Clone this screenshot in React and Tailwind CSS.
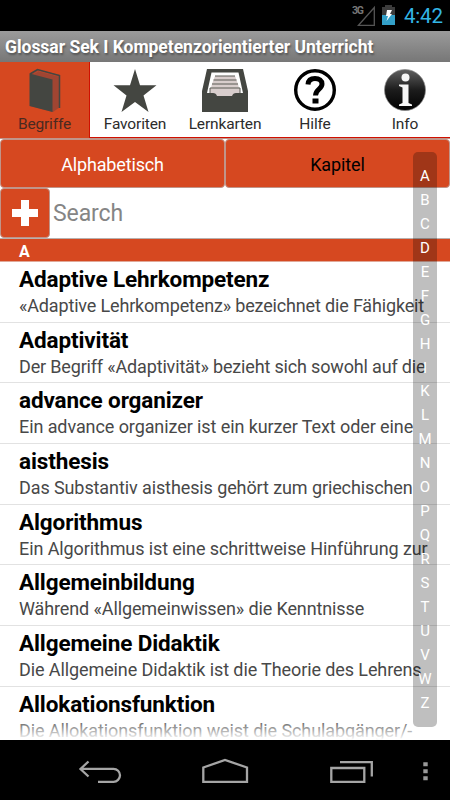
import React from "react";

const entries = [
  { title: "Adaptive Lehrkompetenz", text: "«Adaptive Lehrkompetenz» bezeichnet die Fähigkeit", tracking: "tracking-[-0.165px]" },
  { title: "Adaptivität", text: "Der Begriff «Adaptivität» bezieht sich sowohl auf die", tracking: "tracking-[-0.165px]" },
  { title: "advance organizer", text: "Ein advance organizer ist ein kurzer Text oder eine", tracking: "tracking-[-0.090px]" },
  { title: "aisthesis", text: "Das Substantiv aisthesis gehört zum griechischen", tracking: "tracking-[-0.100px]" },
  { title: "Algorithmus", text: "Ein Algorithmus ist eine schrittweise Hinführung zur", tracking: "tracking-[-0.095px]" },
  { title: "Allgemeinbildung", text: "Während «Allgemeinwissen» die Kenntnisse", tracking: "tracking-[-0.120px]" },
  { title: "Allgemeine Didaktik", text: "Die Allgemeine Didaktik ist die Theorie des Lehrens", tracking: "tracking-[-0.100px]" },
  { title: "Allokationsfunktion", text: "Die Allokationsfunktion weist die Schulabgänger/-", tracking: "tracking-[-0.090px]" },
];

const letters = "ABCDEFGHIKLMNOPQRSTUVWZ".split("");

const BookIcon = () => (
  <svg width="32" height="46" viewBox="0 0 32 46">
    <path d="M1 5.500 8 1.500l23 5.500v32l-7 5L1 38z" fill="#a04532" />
    <path d="M5 5.500 9.500 3 29 8" fill="none" stroke="#c0492c" strokeWidth=".8" />
    <path d="M1 6 8.500 1.500 30.500 7.500V40" fill="none" stroke="#444641" strokeWidth="1.500" />
    <path d="M.5 5.500 23.500 11.500V44L.5 38z" fill="#444641" />
  </svg>
);

const StarIcon = () => (
  <svg width="44" height="46" viewBox="0 0 44 46">
    <path d="M22 1l5 16.300h16.500L30.500 27.500 35.500 44 22 34 8.500 44l5-16.500L.500 17.300H17z" fill="#444641" />
  </svg>
);

const CardsIcon = () => (
  <svg width="48" height="46" viewBox="0 0 48 46">
    <path d="M6 1h36l5 22v21H1V23z" fill="#444641" />
    <path d="M10.500 4.500h27L42 25H6z" fill="#fff" />
    <path d="M14 8h20l1.500 4H12.500zM12.500 12h23l1.500 4H11zM11 16h26l1 4H10zM9 20h30v8H9z" fill="#d8cdcc" />
    <path d="M14 8h20M12.500 12h23M11 16h26M9 20h30M9 20v5M39 20v5" stroke="#5a5a55" strokeWidth="1" />
    <path d="M1 25h11q3 0 4 3l1 2.500h13l1-2.500q1-3 4-3h12v19H1z" fill="#444641" />
  </svg>
);

const HelpIcon = () => (
  <svg width="44" height="46" viewBox="0 0 44 46">
    <circle cx="22" cy="22" r="19.300" fill="#fff" stroke="#000" strokeWidth="3.400" />
    <path d="M15 16.500c.3-4.500 3-6 7-6 4.300 0 7 2 7 5.500 0 5.200-6.500 5-6.500 11.500" fill="none" stroke="#000" strokeWidth="5" />
    <path d="M19.500 30.500h6v5h-6z" />
  </svg>
);

const InfoIcon = () => (
  <svg width="44" height="46" viewBox="0 0 44 46">
    <defs>
      <linearGradient id="ball" x1="0" y1="0" x2="0" y2="1">
        <stop offset="0" stopColor="#606060" />
        <stop offset=".5" stopColor="#1c1c1c" />
        <stop offset="1" stopColor="#000" />
      </linearGradient>
    </defs>
    <circle cx="22" cy="22" r="20.500" fill="url(#ball)" stroke="#888" strokeWidth=".7" />
    <circle cx="22.500" cy="9.500" r="4" fill="#f5f5f5" />
    <path d="M16 16.500h9.500V35l3.500 1.500V38H16v-1.500l3.500-1.500V19.500L16 18z" fill="#f5f5f5" />
  </svg>
);

const tabs = [
  { label: "Begriffe", icon: BookIcon, active: true },
  { label: "Favoriten", icon: StarIcon },
  { label: "Lernkarten", icon: CardsIcon },
  { label: "Hilfe", icon: HelpIcon },
  { label: "Info", icon: InfoIcon },
];

const StatusBar = () => (
  <div className="flex h-[31px] shrink-0 items-center justify-end bg-black pr-[8px]">
    <svg width="45" height="31" viewBox="0 0 45 31">
      <text x="0" y="14" fontSize="10.500" fontWeight="700" fill="#777" textLength="12">3G</text>
      <path d="M6.500 25.300L22.300 7.500v17.800z" fill="none" stroke="#555" strokeWidth="1.300" />
      <path d="M30 7h3V5h7v2h3v8H30z" fill="#3c3c3c" />
      <path d="M30 15h13v10H30z" fill="#33a0c8" />
      <path d="M35 10h5l-2 4h2l-5.500 7 1.500-5h-2z" fill="#fff" />
    </svg>
    <span className="ml-[7px] w-[38px] whitespace-nowrap text-[20.500px] leading-[32px] tracking-[-0.200px] text-[#33b5e5]">4:42</span>
  </div>
);

const TabBar = () => (
  <div className="flex h-[76px] shrink-0">
    {tabs.map(({ label, icon: Icon, active }) => (
      <div
        key={label}
        className={
          active
            ? "flex w-[90px] flex-col items-center border-r border-r-[#d01000] bg-[#d64820] pt-[6px] text-[#4a2a20]"
            : "flex w-[90px] flex-col items-center border-b border-b-[#d01000] bg-white pt-[6px] text-[#2c2c2c]"
        }
      >
        <Icon />
        <span className="text-[15.500px] leading-[20px] tracking-[-0.150px]">{label}</span>
      </div>
    ))}
  </div>
);

const Entry = ({ title, text, tracking }) => (
  <div className="h-[60.700px] shrink-0 border-b border-[#e2e2e2] pl-[19px] whitespace-nowrap">
    <div className="pt-[4px] text-[22.500px] leading-[27px] font-bold tracking-[-0.120px] text-black">{title}</div>
    <div className={`text-[18px] leading-[26px] text-[#484848] ${tracking}`}>{text}</div>
  </div>
);

const NavBar = () => (
  <div className="flex h-[60px] shrink-0 bg-black">
    <svg width="450" height="60" viewBox="0 0 450 60" fill="none" stroke="#a5a5a5" strokeWidth="2.300">
      <path d="M88.500 21.500L80.500 29l8 7.500M81 28.800h32.500a6.500 6.500 0 0 1 0 13H98" />
      <path d="M203.300 41.800V27.500L225 20l22 7.500v14.300z" />
      <path d="M331.300 28h33v13.800h-33zM340 22.200h31.800V36.500" />
      <path d="M425.500 22.300v18" stroke="#999" strokeWidth="4.400" strokeDasharray="4 3" />
    </svg>
  </div>
);

export default function App() {
  return (
    <div className="relative flex h-[800px] w-[450px] flex-col overflow-hidden bg-white font-['Roboto',sans-serif]">
      <StatusBar />
      <header className="flex h-[31px] shrink-0 items-center border-b border-[#777] bg-linear-to-b from-[#9b9b9b] to-[#787878] pt-[2px] pl-[5px] text-[17.500px] font-bold tracking-[-0.020px] whitespace-nowrap text-white [text-shadow:1px_2px_2px_#555]">
        Glossar Sek I Kompetenzorientierter Unterricht
      </header>
      <TabBar />
      <div className="flex h-[50px] shrink-0 border-t border-[#c0958a]">
        <button className="h-[49px] w-[225px] rounded-[4px] border border-[#c0958a] bg-[#d64820] pt-[2px] text-[18px] tracking-[-0.150px] text-white">Alphabetisch</button>
        <button className="h-[49px] w-[225px] rounded-[4px] border border-[#c0958a] bg-[#d64820] pt-[2px] text-[18px] tracking-[-0.100px] text-black">Kapitel</button>
      </div>
      <div className="flex h-[50px] shrink-0 items-center">
        <button className="flex h-[50px] w-[50px] items-center justify-center rounded-[4px] border border-[#c0958a] bg-[#d64820]">
          <svg width="26" height="26" viewBox="0 0 26 26">
            <path d="M9 0h8v9h9v8h-9v9H9v-9H0V9h9z" fill="#fff" />
          </svg>
        </button>
        <span className="mt-[3px] ml-[3px] text-[23px] tracking-[-0.100px] text-[#858585]">Search</span>
      </div>
      <div className="flex h-[24px] shrink-0 items-center border-y border-t-[#b8b0ae] border-b-[#e0a898] bg-[#d64820] pt-[3px] pl-[19px] text-[16px] font-bold text-white">A</div>
      <div className="relative flex min-h-0 flex-1 flex-col overflow-hidden">
        {entries.map((entry) => (
          <Entry key={entry.title} {...entry} />
        ))}
        <div className="absolute inset-x-0 bottom-0 h-[22px] bg-linear-to-b from-white/0 to-white" />
      </div>
      <NavBar />
      <div className="absolute top-[152px] left-[413px] flex h-[575px] w-[24px] flex-col items-center rounded-[5px] bg-black/25 pt-[12px] text-[15px] text-white">
        {letters.map((letter) => (
          <span key={letter} className="h-[23.940px] leading-[25px]">{letter}</span>
        ))}
      </div>
    </div>
  );
}
